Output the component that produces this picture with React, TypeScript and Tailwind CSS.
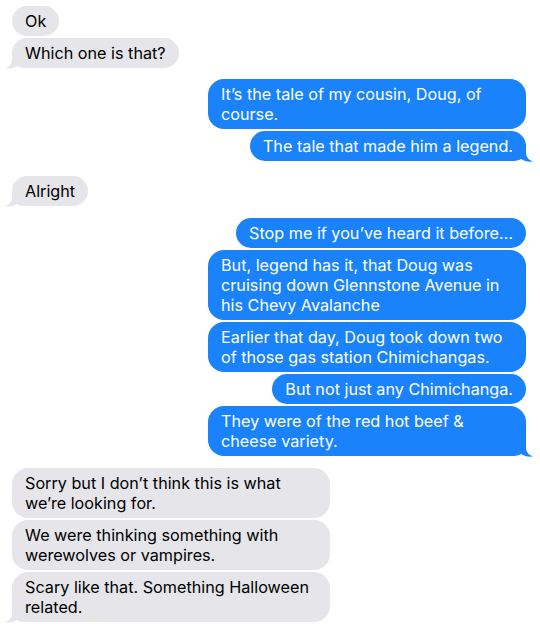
import React from 'react';

type Msg = { lines: string[]; me: boolean; tail?: boolean; gap?: string; wide?: boolean };

const messages: Msg[] = [
  { lines: ['Ok'], me: false, gap: 'mt-[6px]' },
  { lines: ['Which one is that?'], me: false, tail: true },
  { lines: ['It\u2019s the tale of my cousin, Doug, of', 'course.'], me: true, gap: 'mt-[11px]', wide: true },
  { lines: ['The tale that made him a legend.'], me: true, tail: true },
  { lines: ['Alright'], me: false, tail: true, gap: 'mt-[15px]' },
  { lines: ['Stop me if you\u2019ve heard it before\u2026'], me: true, gap: 'mt-[12px]' },
  { lines: ['But, legend has it, that Doug was', 'cruising down Glennstone Avenue in', 'his Chevy Avalanche'], me: true, wide: true },
  { lines: ['Earlier that day, Doug took down two', 'of those gas station Chimichangas.'], me: true, wide: true },
  { lines: ['But not just any Chimichanga.'], me: true },
  { lines: ['They were of the red hot beef &', 'cheese variety.'], me: true, tail: true, wide: true },
  { lines: ['Sorry but I don\u2019t think this is what', 'we\u2019re looking for.'], me: false, gap: 'mt-[12px]', wide: true },
  { lines: ['We were thinking something with', 'werewolves or vampires.'], me: false, wide: true },
  { lines: ['Scary like that. Something Halloween', 'related.'], me: false, tail: true, wide: true },
];

const Tail = ({ me }: { me: boolean }) => (
  <svg
    width="22"
    height="18"
    viewBox="0 0 22 18"
    className={
      me
        ? 'absolute right-[-7px] bottom-[-1px]'
        : 'absolute left-[-7px] bottom-[-1px] -scale-x-100'
    }
  >
    <path
      d="M15 0 L15 8 C15 13 17.5 16 22 17.5 C17 18 13 17 10 15 C8 16.5 5 17 0 17 L0 0 Z"
      fill={me ? '#1a82fb' : '#e5e5ea'}
    />
  </svg>
);

const Bubble = ({ msg }: { msg: Msg }) => (
  <div className={`flex ${msg.me ? 'justify-end' : 'justify-start'} ${msg.gap ?? 'mt-[2px]'}`}>
    <div
      className={`relative rounded-[16px] px-[13px] py-[5px] text-[16.2px] leading-[20px] whitespace-nowrap ${
        msg.me ? 'bg-[#1a82fb] text-white' : 'bg-[#e5e5ea] text-black'
      } ${msg.wide ? 'w-[318px]' : 'w-fit'}`}
    >
      {msg.tail && <Tail me={msg.me} />}
      {msg.lines.map((l, i) => (
        <div key={i} className="relative">
          {l}
        </div>
      ))}
    </div>
  </div>
);

export default function App() {
  return (
    <div
      className="w-[540px] h-[626px] bg-white pl-[12px] pr-[14px] overflow-hidden"
      style={{ fontFamily: 'Inter, "Noto Sans", sans-serif' }}
    >
      {messages.map((m, i) => (
        <Bubble key={i} msg={m} />
      ))}
    </div>
  );
}
